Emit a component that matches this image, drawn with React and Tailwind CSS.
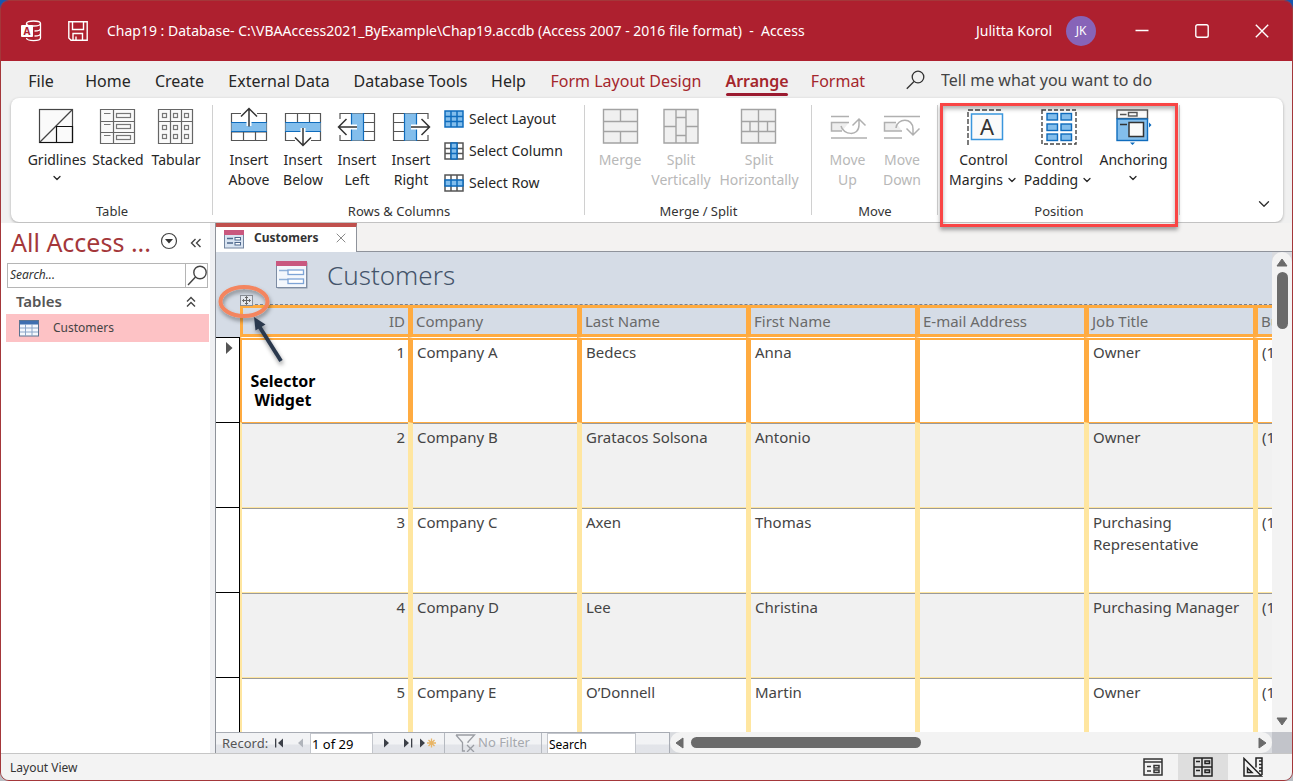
import React from "react";
import { ChevronDown, X } from "lucide-react";

const COLUMNS = ["Company", "Last Name", "First Name", "E-mail Address", "Job Title", "Business Phone"];

const ROWS = [
  ["1", "Company A", "Bedecs", "Anna", "", "Owner", "(123)555-0100"],
  ["2", "Company B", "Gratacos Solsona", "Antonio", "", "Owner", "(123)555-0100"],
  ["3", "Company C", "Axen", "Thomas", "", "Purchasing Representative", "(123)555-0100"],
  ["4", "Company D", "Lee", "Christina", "", "Purchasing Manager", "(123)555-0100"],
  ["5", "Company E", "O’Donnell", "Martin", "", "Owner", "(123)555-0100"],
];

const TABS = [
  { label: "File", width: "w-[26px]" },
  { label: "Home", width: "w-[46px]" },
  { label: "Create", width: "w-[49px]" },
  { label: "External Data", width: "w-[102px]" },
  { label: "Database Tools", width: "w-[113px]" },
  { label: "Help", width: "w-[35px]" },
  { label: "Form Layout Design", width: "w-[152px]", tone: "red" },
  { label: "Arrange", width: "w-[62px]", tone: "active" },
  { label: "Format", width: "w-[52px]", tone: "red" },
];

const BLUE = "#83beec";
const DEEP = "#0f6cbd";
const INK = "#555555";
const MUTED = "#a3a3a3";

function Icon({ children, w = 40, h = 40, className = "" }) {
  return (
    <svg width={w} height={h} viewBox={`0 0 ${w} ${h}`} fill="none" aria-hidden="true" className={`shrink-0 ${className}`}>
      {children}
    </svg>
  );
}

const GridlinesIcon = () => (
  <Icon>
    <rect x="2.5" y="2.5" width="33" height="33" fill="#fafafa" stroke="#444" strokeWidth="1.2" />
    <path d="M2.500 35.500 35.500 2.500" stroke="#444" strokeWidth="1.2" />
    <path d="M19.5 35.500V19.5H35.500V35.500Z" stroke="#111" strokeWidth="1.2" />
    <path d="M2.500 35.500h33" stroke="#111" strokeWidth="1.2" />
  </Icon>
);

const StackedIcon = () => (
  <Icon>
    <rect x="2.5" y="2.5" width="34" height="34" fill="#fafafa" />
    <path d="M2.5 2.5H36.500V36.500H2.5ZM15.5 2.5V36.500M2.5 14.5H36.500M2.5 25.5H36.500" stroke="#666" strokeWidth="1.2" />
    {[7, 18, 29].map((y) => (
      <g key={y} stroke="#777" strokeWidth="1.2">
        <path d={`M6 ${y - 0.5}h6.500`} />
        <rect x="18.5" y={y - 0.5} width="14" height="4" />
      </g>
    ))}
  </Icon>
);

const TabularIcon = () => (
  <Icon>
    <rect x="2.500" y="2.500" width="34" height="34" fill="#fafafa" />
    <path d="M2.500 2.500H36.500V36.500H2.500ZM14.500 2.500V36.500M25.500 2.500V36.500M2.500 14.500H36.500" stroke="#666" strokeWidth="1.200" />
    {[6.5, 18.5, 27.5].map((y) =>
      [6.5, 17.5, 28.5].map((x) => (
        <rect key={`${x}-${y}`} x={x} y={y} width="4" height="4" stroke="#777" strokeWidth="1.200" />
      ))
    )}
  </Icon>
);

const InsertAboveIcon = () => (
  <Icon>
    <path d="M12 6.500H2.500V33.500H37.500V6.500H28M2.500 25H37.500M14.500 25v8.500M26.500 25v8.500" stroke={INK} strokeWidth="1.200" />
    <rect x="2.500" y="15.500" width="35" height="9.500" fill={BLUE} />
    <path d="M2 15.500H38M2 24.500H38" stroke={DEEP} strokeWidth="1.200" />
    <path d="M20 19V5" stroke="#fff" strokeWidth="5" />
    <path d="M20 19.500V1.500M12 9.500l8-8 8 8" stroke="#333" strokeWidth="1.500" />
  </Icon>
);

const InsertBelowIcon = () => (
  <Icon>
    <path d="M12 33.500H2.500V6.500H37.500V33.500H28M14.500 6.500V15.500M26.500 6.500V15.500" stroke={INK} strokeWidth="1.200" />
    <rect x="2.500" y="15.500" width="35" height="9.500" fill={BLUE} />
    <path d="M2 15.500H38M2 24.500H38" stroke={DEEP} strokeWidth="1.200" />
    <path d="M20 21V35" stroke="#fff" strokeWidth="5" />
    <path d="M20 21V38.500M12 30.500l8 8 8-8" stroke="#333" strokeWidth="1.500" />
  </Icon>
);

const SideArrow = () => (
  <>
    <path d="M3 12V6.500H37.500V33.500H3V28M26 15.500h11.500M26 24.500h11.500" stroke={INK} strokeWidth="1.200" />
    <rect x="14.500" y="6.500" width="12" height="27" fill={BLUE} />
    <path d="M14.500 6V34M26.500 6V34" stroke={DEEP} strokeWidth="1.200" />
    <path d="M20 20H5" stroke="#fff" strokeWidth="5" />
    <path d="M20 20H1.500M9.500 12l-8 8 8 8" stroke="#333" strokeWidth="1.500" />
  </>
);
const InsertLeftIcon = () => (
  <Icon>
    <SideArrow />
  </Icon>
);
const InsertRightIcon = () => (
  <Icon>
    <g transform="translate(40 0) scale(-1 1)">
      <SideArrow />
    </g>
  </Icon>
);

function SelectIcon({ kind }) {
  const all = kind === "layout";
  return (
    <Icon w={20} h={18}>
      <rect x="1" y="1" width="18" height="16" fill={all ? BLUE : "#fff"} />
      <path d="M1 1H19V17H1ZM7 1V17M13 1V17M1 6.500H19M1 11.500H19" stroke={all ? DEEP : INK} strokeWidth="1.500" />
      {kind === "column" && (
        <path d="M7 1h6V17H7ZM7 6.500h6M7 11.500h6" fill={BLUE} stroke={DEEP} strokeWidth="1.500" />
      )}
      {kind === "row" && (
        <path d="M1 6H19V12H1ZM7 6v6M13 6v6" fill={BLUE} stroke={DEEP} strokeWidth="1.500" />
      )}
    </Icon>
  );
}

const MergeIcon = () => (
  <Icon>
    <path d="M3.500 2.500H37.500V36H3.500ZM3.500 14.500h34M3.500 24.500h34M20.500 2.500v12M20.500 24.500V36" fill="#f0f0f0" stroke={MUTED} strokeWidth="1.400" />
  </Icon>
);
const SplitVerticalIcon = () => (
  <Icon>
    <path d="M3 2.500H37V36H3ZM15 2.500V36M25 2.500V36M3 19.500H15M25 19.500H37M15 10.500h10M15 28.500h10" fill="#f0f0f0" stroke={MUTED} strokeWidth="1.400" />
  </Icon>
);
const SplitHorizontalIcon = () => (
  <Icon>
    <path d="M2.500 2.500H36.500V36H2.500ZM2.500 14.500h34M2.500 24.500h34M19.500 2.500V36M11 14.500v10M28.500 14.500v10" fill="#f0f0f0" stroke={MUTED} strokeWidth="1.400" />
  </Icon>
);
const MoveUpIcon = () => (
  <Icon>
    <path d="M3 9.500H21M3 31H39" stroke="#b0b0b0" strokeWidth="1.500" />
    <path d="M21 15.500H3.500V24H14" fill="#eee" stroke="#b0b0b0" strokeWidth="1.500" />
    <path d="M13 19c2 9 18 11 18-1V12M24.500 18.500 31 12l6.500 6.500" stroke="#b0b0b0" strokeWidth="1.500" />
  </Icon>
);
const MoveDownIcon = () => (
  <Icon>
    <path d="M2 9.500H38M2 31H20" stroke="#b0b0b0" strokeWidth="1.500" />
    <path d="M14 15.500H2.500V24H20" fill="#eee" stroke="#b0b0b0" strokeWidth="1.500" />
    <path d="M14 21c1-10 17-11 17 1v6M24.500 21.500 31 28l6.500-6.500" stroke="#b0b0b0" strokeWidth="1.500" />
  </Icon>
);
const MarginsIcon = () => (
  <Icon>
    <path d="M4 38V3H39" stroke="#444" strokeWidth="1.400" strokeDasharray="5 2" />
    <rect x="7.500" y="7" width="31" height="25.500" fill="#fafafa" stroke="#3a96dd" strokeWidth="1.500" />
    <text x="23" y="28" textAnchor="middle" fontSize="22" fill="#333" fontFamily="Noto Sans, sans-serif">A</text>
  </Icon>
);
const PaddingIcon = () => (
  <Icon>
    <rect x="3" y="3" width="34" height="34" stroke="#444" strokeWidth="1.400" strokeDasharray="4 2" />
    {[6.5, 17, 27].map((y) =>
      [8, 22].map((x) => (
        <rect key={`${x}-${y}`} x={x} y={y} width="10.500" height="6.500" fill={BLUE} stroke={DEEP} strokeWidth="1.400" />
      ))
    )}
  </Icon>
);
const AnchoringIcon = () => (
  <Icon>
    <rect x="3" y="3" width="30.500" height="8.500" fill="#fafafa" stroke="#555" strokeWidth="1.400" />
    <path d="M6 7.500h6.500" stroke="#555" strokeWidth="1.400" />
    <rect x="14.500" y="5.500" width="8.500" height="3.500" stroke="#555" strokeWidth="1.400" />
    <rect x="3" y="12" width="30.500" height="21.500" fill={BLUE} stroke={DEEP} strokeWidth="1.400" />
    <path d="M6 17.500h7" stroke="#333" strokeWidth="1.400" />
    <rect x="15" y="15.500" width="14.500" height="14" fill="#fafafa" stroke="#333" strokeWidth="1.500" />
    <path d="M35 15.500l2.500 2.500-2.500 2.500ZM16 35.500h5l-2.500 2.500Z" fill={DEEP} />
  </Icon>
);

function BigButton({ icon, lines, width, arrow, disabled }) {
  return (
    <button type="button" disabled={disabled} className={`flex shrink-0 flex-col items-center ${width} ${disabled ? "text-[#b8b8b8]" : "text-[#262626]"}`}>
      {icon}
      <span className="mt-[3px] flex flex-col items-center text-sm leading-5 whitespace-nowrap">
        {lines.map((line, i) => (
          <span key={line} className="flex items-center gap-[3px]">
            {line}
            {arrow && i === 1 && <ChevronDown size={12} strokeWidth={2.5} />}
          </span>
        ))}
        {arrow && lines.length === 1 && (
          <span className="flex h-4 items-center">
            <ChevronDown size={12} strokeWidth={2.5} />
          </span>
        )}
      </span>
    </button>
  );
}

function Group({ label, width, children }) {
  return (
    <section aria-label={label} className={`relative flex shrink-0 flex-col ${width}`}>
      <div className="flex h-[103px] pt-[9px]">{children}</div>
      <div className="text-center text-[13px] leading-5 text-[#333]">{label}</div>
      <span className="absolute top-[7px] right-0 h-[110px] w-px bg-[#d0d0d0]" />
    </section>
  );
}

function TitleBar() {
  return (
    <header className="flex h-[60px] shrink-0 items-center bg-[#ae202f] text-sm text-white">
      <svg width="22" height="22" viewBox="0 0 22 22" className="ml-[19px] shrink-0" aria-hidden="true">
        <g fill="none" stroke="#fff" strokeWidth="1.300">
          <ellipse cx="13.500" cy="3.500" rx="7" ry="2.500" />
          <path d="M20.500 3.500v14.500c0 3.500-14 3.500-14 0M20.500 8.500c0 2-4 2.500-6 2.500M20.500 13.500c0 2-4 2.500-6 2.500M6.500 3.500V6" />
        </g>
        <rect x="1" y="5" width="12" height="12" rx="1" fill="#fff" />
        <text x="7" y="14.500" textAnchor="middle" fontSize="10" fontWeight="700" fill="#ae202f" fontFamily="Noto Sans, sans-serif">A</text>
      </svg>
      <button type="button" aria-label="Save" className="ml-[26px] shrink-0">
        <svg width="20" height="20" viewBox="0 0 20 20" fill="none" stroke="#fff" strokeWidth="1.400" aria-hidden="true">
          <path d="M.8.8H19.200V19.200H3L.8 17ZM4.500.8V8.500H15.500V.8M5 19V12.500H14.500V19M8 19v-3.500" />
        </svg>
      </button>
      <h1 className="ml-[19px] grow whitespace-pre">
        Chap19 : Database- C:\VBAAccess2021_ByExample\Chap19.accdb (Access 2007 - 2016 file format){"  "}-{"  "}Access
      </h1>
      <span>Julitta Korol</span>
      <span className="ml-[14px] flex size-[30px] items-center justify-center rounded-full bg-[#8764b8] text-xs">JK</span>
      <button type="button" aria-label="Minimize" className="ml-4 flex w-[60px] justify-center">
        <svg width="14" height="14" viewBox="0 0 14 14" stroke="#fff" strokeWidth="1.300" aria-hidden="true">
          <path d="M.5 6.500h13" />
        </svg>
      </button>
      <button type="button" aria-label="Maximize" className="flex w-[60px] justify-center">
        <svg width="14" height="14" viewBox="0 0 14 14" fill="none" stroke="#fff" strokeWidth="1.400" aria-hidden="true">
          <rect x=".8" y=".8" width="12.400" height="12.400" rx="1.800" />
        </svg>
      </button>
      <button type="button" aria-label="Close" className="flex w-[60px] justify-center">
        <svg width="14" height="14" viewBox="0 0 14 14" stroke="#fff" strokeWidth="1.400" aria-hidden="true">
          <path d="M.8.8 13.200 13.200M13.200.8.8 13.200" />
        </svg>
      </button>
    </header>
  );
}

function Ribbon() {
  return (
    <div className="shrink-0 bg-[#f0f0f0] pb-px">
      <nav aria-label="Ribbon tabs" className="flex h-[37px] items-center gap-x-6 pl-[27px] text-base text-[#262626]">
        {TABS.map(({ label, width, tone }) => (
          <button
            key={label}
            type="button"
            className={`relative flex h-full shrink-0 items-center justify-center whitespace-nowrap pt-[2px] ${width} ${label === "File" ? "mr-[7px]" : ""} ${
              tone ? "text-[#a4262c]" : ""
            } ${tone === "active" ? "font-semibold" : ""}`}
          >
            {label}
            {tone === "active" && <span className="absolute inset-x-0 bottom-[2px] h-[3px] rounded-sm bg-[#9b1b30]" />}
          </button>
        ))}
        <div className="ml-[18px] flex grow items-center gap-4">
          <svg width="19" height="20" viewBox="0 0 19 20" fill="none" stroke="#333" strokeWidth="1.300" className="shrink-0" aria-hidden="true">
            <circle cx="12" cy="7" r="5.800" />
            <path d="M8 11.500.8 18.800" />
          </svg>
          <input
            type="text"
            aria-label="Tell me what you want to do"
            placeholder="Tell me what you want to do"
            className="w-full min-w-0 bg-transparent text-base text-[#333] outline-none placeholder:text-[#444]"
          />
        </div>
      </nav>

      <div className="mr-[9px] ml-[10px] flex h-[124px] rounded-lg bg-white shadow-[0_1px_3px_rgba(0,0,0,0.3)]">
        <Group label="Table" width="w-[202px]">
          <div className="flex pl-[15px]">
            <BigButton width="w-[62px]" icon={<GridlinesIcon />} lines={["Gridlines"]} arrow />
            <BigButton width="w-[60px]" icon={<StackedIcon />} lines={["Stacked"]} />
            <BigButton width="w-[56px]" icon={<TabularIcon />} lines={["Tabular"]} />
          </div>
        </Group>
        <Group label="Rows & Columns" width="w-[372px]">
          <div className="flex pl-[9px]">
            <BigButton width="w-[54px]" icon={<InsertAboveIcon />} lines={["Insert", "Above"]} />
            <BigButton width="w-[54px]" icon={<InsertBelowIcon />} lines={["Insert", "Below"]} />
            <BigButton width="w-[54px]" icon={<InsertLeftIcon />} lines={["Insert", "Left"]} />
            <BigButton width="w-[54px]" icon={<InsertRightIcon />} lines={["Insert", "Right"]} />
            <div className="ml-[6px] flex flex-col items-start gap-2 text-sm text-[#262626]">
              <button type="button" className="flex h-6 items-center gap-[5px]">
                <SelectIcon kind="layout" /> Select Layout
              </button>
              <button type="button" className="flex h-6 items-center gap-[5px]">
                <SelectIcon kind="column" /> Select Column
              </button>
              <button type="button" className="flex h-6 items-center gap-[5px]">
                <SelectIcon kind="row" /> Select Row
              </button>
            </div>
          </div>
        </Group>
        <Group label="Merge / Split" width="w-[227px]">
          <div className="flex pl-[7px]">
            <BigButton width="w-[56px]" icon={<MergeIcon />} lines={["Merge"]} disabled />
            <BigButton width="w-[66px]" icon={<SplitVerticalIcon />} lines={["Split", "Vertically"]} disabled />
            <BigButton width="w-[90px]" icon={<SplitHorizontalIcon />} lines={["Split", "Horizontally"]} disabled />
          </div>
        </Group>
        <Group label="Move" width="w-[126px]">
          <div className="flex pl-2">
            <BigButton width="w-[55px]" icon={<MoveUpIcon />} lines={["Move", "Up"]} disabled />
            <BigButton width="w-[54px]" icon={<MoveDownIcon />} lines={["Move", "Down"]} disabled />
          </div>
        </Group>
        <Group label="Position" width="w-[242px]">
          <div className="flex pl-2">
            <BigButton width="w-[75px]" icon={<MarginsIcon />} lines={["Control", "Margins"]} arrow />
            <BigButton width="w-[75px]" icon={<PaddingIcon />} lines={["Control", "Padding"]} arrow />
            <BigButton width="w-[75px]" icon={<AnchoringIcon />} lines={["Anchoring"]} arrow />
          </div>
          <span className="pointer-events-none absolute top-[5px] right-[2px] -bottom-[5px] left-[2px] z-10 border-[3px] border-[#f94545] shadow-[0_3px_4px_rgba(0,0,0,0.35),inset_0_3px_4px_rgba(0,0,0,0.3)]" />
        </Group>
        <div className="flex grow items-end justify-end pr-[10px] pb-[9px]">
          <button type="button" aria-label="Collapse ribbon">
            <ChevronDown size={18} strokeWidth={1.8} color="#333" />
          </button>
        </div>
      </div>
    </div>
  );
}

function NavigationPane() {
  return (
    <aside className="flex w-[209px] shrink-0 flex-col bg-white">
      <div className="flex h-10 items-center pr-2 pl-[10px]">
        <h2 className="grow text-[25px] whitespace-nowrap text-[#a4373a]">All Access ...</h2>
        <button type="button" aria-label="Pane options" className="-mt-1 mr-3">
          <svg width="18" height="18" viewBox="0 0 18 18" fill="none" aria-hidden="true">
            <circle cx="9" cy="9" r="7.500" stroke="#444" strokeWidth="1.200" />
            <path d="M5 7h8L9 11.500Z" fill="#333" />
          </svg>
        </button>
        <button type="button" aria-label="Close pane">
          <svg width="12" height="12" viewBox="0 0 12 12" fill="none" stroke="#444" strokeWidth="1.400" aria-hidden="true">
            <path d="M5.500 2 1.500 6l4 4M10.500 2 6.500 6l4 4" />
          </svg>
        </button>
      </div>
      <div className="mr-[2px] ml-[6px] flex h-[25px] border border-[#b5b5b5]">
        <input type="text" aria-label="Search objects" placeholder="Search..." className="w-full min-w-0 pb-px pl-[2px] text-xs italic outline-none placeholder:text-[#333]" />
        <button type="button" aria-label="Search" className="flex w-[22px] shrink-0 items-center justify-center border-l border-[#b5b5b5]">
          <svg width="20" height="21" viewBox="0 0 20 21" fill="none" stroke="#444" strokeWidth="1.400" aria-hidden="true">
            <circle cx="13" cy="7.500" r="6.200" />
            <path d="M8.500 12 1 20" />
          </svg>
        </button>
      </div>
      <div className="flex h-[26px] items-center justify-between pt-px pr-[13px] pl-[15px]">
        <h3 className="text-[15px] font-semibold text-[#555]">Tables</h3>
        <button type="button" aria-label="Collapse tables">
          <svg width="12" height="12" viewBox="0 0 12 12" fill="none" stroke="#444" strokeWidth="1.400" aria-hidden="true">
            <path d="M2 5.500 6 1.500l4 4M2 10.500 6 6.500l4 4" />
          </svg>
        </button>
      </div>
      <button type="button" className="mr-px ml-[5px] flex h-7 items-center gap-[14px] bg-[#fdc2c5] pl-[13px] text-xs text-[#444]">
        <svg width="20" height="17" viewBox="0 0 20 17" fill="none" aria-hidden="true">
          <rect x=".5" y=".5" width="19" height="15.500" fill="#f4f8fd" stroke="#5b7390" />
          <rect x="1" y="1" width="18" height="3.500" fill="#3f6fb0" />
          <path d="M6.500 4v12M13 4v12M1 8h18M1 12h18" stroke="#8aa5c8" />
        </svg>
        Customers
      </button>
    </aside>
  );
}

function FormIcon({ big }) {
  return big ? (
    <svg width="32" height="28" viewBox="0 0 32 28" fill="none" className="shrink-0" aria-hidden="true">
      <rect x="1.500" y="1.500" width="30" height="26" fill="#8e99a8" />
      <rect x=".5" y=".5" width="30" height="26" fill="#f3f7fc" stroke="#7d8ca3" />
      <rect x="0" y="0" width="31" height="5" fill="#c9587f" />
      <path d="M3 9.500h9M3 18.500h9" stroke="#8fb0d8" strokeWidth="1.300" />
      <rect x="12" y="9" width="15.500" height="4.500" fill="#fff" stroke="#7da4d6" strokeWidth="1.300" />
      <rect x="12" y="18" width="15.500" height="4.500" fill="#fff" stroke="#7da4d6" strokeWidth="1.300" />
    </svg>
  ) : (
    <svg width="20" height="19" viewBox="0 0 20 19" fill="none" className="shrink-0" aria-hidden="true">
      <rect x=".5" y="1" width="19" height="17" fill="#d9e4f2" stroke="#7486a0" />
      <rect x="0" y="0" width="20" height="5" fill="#c9587f" />
      <path d="M3 8.500h6M3 13h6" stroke="#4d678c" strokeWidth="1.500" />
      <rect x="11" y="7.500" width="5.500" height="2.500" fill="#fff" stroke="#4d678c" />
      <rect x="11" y="12.500" width="5.500" height="2.500" fill="#fff" stroke="#4d678c" />
    </svg>
  );
}

function RecordTable() {
  return (
    <table className="w-full min-w-[1206px] table-fixed border-separate border-spacing-0 text-left text-[15px] leading-[22px] text-[#444]">
      <colgroup>
        <col className="w-6" />
        <col className="w-[168px]" />
        {COLUMNS.map((name) => (
          <col key={name} className="w-[169px]" />
        ))}
      </colgroup>
      <thead>
        <tr className="h-8 text-[#6a6a6a]">
          <td className="bg-[#d5dce6]" />
          <th scope="col" className="border-y-[3px] border-l-[3px] border-[#ffab40] bg-[#d5dce6] pr-[3px] text-right font-normal">ID</th>
          {COLUMNS.map((name) => (
            <th key={name} scope="col" className="border-y-[3px] border-l-[5px] border-[#ffab40] bg-[#d5dce6] pl-[3px] font-normal whitespace-nowrap">
              {name}
            </th>
          ))}
        </tr>
      </thead>
      <tbody>
        {ROWS.map((row, r) => {
          const first = r === 0;
          const tint = r % 2 ? "bg-[#f1f1f1]" : "bg-white";
          const side = first ? "border-l-[#ffab40]" : "border-l-[#ffe6a0]";
          const top = first
            ? "border-t-white shadow-[inset_0_2px_0_#ffab40]"
            : r === 1
              ? "border-t-[#ffab40] shadow-[inset_0_1px_0_#9a9a9a]"
              : "border-t-[#ffe6a0] shadow-[inset_0_1px_0_#9a9a9a]";
          return (
            <tr key={row[0]} className="h-[85px] align-top">
              <td className="border-t border-r border-black bg-white p-0">
                {first && (
                  <svg width="8" height="12" viewBox="0 0 8 12" className="mt-1 ml-[10px]" aria-hidden="true">
                    <path d="M0 0l6.500 6L0 12Z" fill="#555" />
                  </svg>
                )}
              </td>
              {row.map((value, c) => (
                <td
                  key={c}
                  className={`border-t pt-[3px] pb-0 ${side} ${top} ${tint} ${c === 0 ? "border-l-2 pr-[3px] text-right" : "border-l-[5px] pr-0 pl-1"}`}
                >
                  {value}
                </td>
              ))}
            </tr>
          );
        })}
      </tbody>
    </table>
  );
}

function Annotation() {
  return (
    <>
      <svg width="110" height="100" viewBox="0 0 110 100" fill="none" className="pointer-events-none absolute top-[22px] left-0 z-10" aria-hidden="true">
        <defs>
          <filter id="soft" x="-20%" y="-20%" width="150%" height="150%">
            <feDropShadow dx="1" dy="3" stdDeviation="2" floodOpacity="0.4" />
          </filter>
        </defs>
        <rect x="24.500" y="21.500" width="12" height="10" fill="#e3e7ee" stroke="#8a8f98" />
        <path d="M30.500 22.500v8M26.500 26.500h8M29 24l1.500-1.500 1.500 1.500M29 29l1.500 1.500 1.500-1.500M28 25 26.500 26.500l1.500 1.500M33 25l1.500 1.500-1.500 1.500" stroke="#666" />
        <ellipse cx="28" cy="27.500" rx="23.500" ry="14.500" stroke="#f4855f" strokeWidth="4" filter="url(#soft)" />
        <g filter="url(#soft)">
          <path d="M65 87 43 52" stroke="#2a394d" strokeWidth="4" />
          <path d="M38 43l11.500 7.500-10 6Z" fill="#2a394d" />
        </g>
      </svg>
      <p className="absolute top-[120px] left-[27px] z-10 w-20 text-center text-base leading-[19px] font-bold text-black">Selector Widget</p>
    </>
  );
}

function ScrollArrow({ dir, label }) {
  const paths = { up: "M1 9 6 2l5 7Z", down: "M1 3l5 7 5-7Z", left: "M9 1 2 6l7 5Z", right: "M3 1l7 5-7 5Z" };
  return (
    <button type="button" aria-label={label} className="flex size-[18px] shrink-0 items-center justify-center">
      <svg width="12" height="12" viewBox="0 0 12 12" aria-hidden="true">
        <path d={paths[dir]} fill="#6b6b6b" stroke="#6b6b6b" strokeWidth="1" strokeLinejoin="round" />
      </svg>
    </button>
  );
}

function NavArrow({ label, dir, bar, disabled, star }) {
  const left = dir === "left";
  return (
    <button type="button" aria-label={label} disabled={disabled} className="flex h-full w-5 shrink-0 items-center justify-center">
      <svg width="20" height="12" viewBox="0 0 20 12" fill={disabled ? "#b0b4bb" : "#3c4048"} aria-hidden="true">
        {left ? <path d="M13 1.500v9L8 6Z" /> : <path d={star ? "M2 1.500v9L7 6Z" : "M6 1.500v9L11 6Z"} />}
        {bar && <rect x={left ? 5 : 13} y="1.500" width="1.300" height="9" />}
        {star && <path d="M13.500 1.500v9M9 6h9M10.500 3l6 6M16.500 3l-6 6" stroke="#e8b566" strokeWidth="1.300" />}
      </svg>
    </button>
  );
}

function RecordBar() {
  return (
    <div className="flex h-[21px] shrink-0">
      <div className="flex w-[454px] shrink-0 items-center border-t border-r border-[#a8acb4] bg-linear-to-b from-[#f2f3f5] from-55% to-[#e2e4e9] to-60% pl-[6px] text-[13px] text-[#555]">
        <span className="w-[48px] pt-[2px]">Record:</span>
        <NavArrow label="First record" dir="left" bar />
        <NavArrow label="Previous record" dir="left" disabled />
        <input aria-label="Current record" defaultValue="1 of 29" className="h-full w-[63px] border border-b-0 border-[#c3c6cc] bg-white pt-px pl-px text-black outline-none" />
        <span className="ml-[5px] flex h-full items-center">
          <NavArrow label="Next record" dir="right" />
          <NavArrow label="Last record" dir="right" bar />
          <NavArrow label="New record" dir="right" star />
        </span>
        <button type="button" disabled className="ml-[6px] flex h-full w-[98px] items-center gap-[2px] border-x border-[#b5b9c0] pl-[10px] whitespace-nowrap text-[#a6a9ae]">
          <svg width="21" height="18" viewBox="0 0 21 18" fill="none" stroke="#9a9da3" strokeWidth="1.300" className="shrink-0" aria-hidden="true">
            <path d="M1 1H19.500L13 8v1M1 1 7.500 8.500V17h2.500M12 11l7 7M19 11l-7 7" />
          </svg>
          No Filter
        </button>
        <input aria-label="Search records" defaultValue="Search" className="ml-[5px] h-full w-[89px] border border-b-0 border-[#c3c6cc] bg-white pt-px pl-px text-xs text-black outline-none" />
      </div>
      <div className="flex min-w-0 grow items-center rounded-full bg-[#f3f3f3] px-px">
        <ScrollArrow dir="left" label="Scroll left" />
        <div className="flex grow items-center pl-[2px]">
          <span className="h-[11px] w-[41%] rounded-full bg-[#6b6b6b]" />
        </div>
        <ScrollArrow dir="right" label="Scroll right" />
      </div>
      <div className="w-5 shrink-0 bg-[#c2c4ca]" />
    </div>
  );
}

function DocumentArea() {
  return (
    <main className="flex min-w-0 grow flex-col border-l border-[#8f939b] bg-[#d9dbdf]">
      <div className="flex h-[29px] shrink-0 bg-[#f3f2f1]">
        <div className="flex w-[141px] shrink-0 items-center gap-[10px] border-t-4 border-r border-t-[#c0504d] border-r-[#8f939b] bg-white pl-[8px]">
          <FormIcon />
          <span className="w-[69px] pb-[3px] text-xs font-bold text-[#333]">Customers</span>
          <button type="button" aria-label="Close tab" className="pb-[3px]">
            <X size={16} strokeWidth={1.3} color="#777" />
          </button>
        </div>
        <div className="grow border-b border-[#8f939b]" />
      </div>
      <div className="flex min-h-0 grow">
        <div className="relative min-w-0 grow overflow-hidden bg-white">
          <div className="flex h-[53px] items-center bg-[#d5dce6] pb-[7px] pl-[60px]">
            <FormIcon big />
            <h2 className="ml-[19px] text-[26px] leading-8 font-light text-[#44546a]">Customers</h2>
          </div>
          <div className="-mt-px flex bg-[#d5dce6] pl-6">
            <span className="grow border-t border-dashed border-[#7c828c]" />
          </div>
          <RecordTable />
          <Annotation />
        </div>
        <div className="flex w-5 shrink-0 flex-col items-center rounded-t-full bg-[#f3f3f3] py-[2px]">
          <ScrollArrow dir="up" label="Scroll up" />
          <div className="flex grow flex-col">
            <span className="h-[13%] w-[11px] rounded-full bg-[#6b6b6b]" />
          </div>
          <ScrollArrow dir="down" label="Scroll down" />
        </div>
      </div>
      <RecordBar />
    </main>
  );
}

function StatusBar() {
  return (
    <footer className="flex h-[27px] shrink-0 items-center border-t border-[#c6c6c6] bg-[#f3f3f3] pl-[9px] text-xs text-[#333]">
      <span className="grow pt-px">Layout View</span>
      <button type="button" aria-label="Form View" className="flex h-full w-[50px] items-center justify-center">
        <svg width="20" height="18" viewBox="0 0 20 18" fill="none" stroke="#333" strokeWidth="1.500" aria-hidden="true">
          <path d="M1 1H19V17H1ZM1 4H19M4 8.500h4M4 13h4M11 7.500h5v2.500h-5ZM11 12h5v2.500h-5Z" />
        </svg>
      </button>
      <button type="button" aria-label="Layout View" className="flex h-full w-[50px] items-center justify-center bg-[#dedede]">
        <svg width="20" height="20" viewBox="0 0 20 20" fill="none" stroke="#222" strokeWidth="1.500" aria-hidden="true">
          <path d="M1 1H19V19H1ZM9 1V19M1 10H19M3 4.500h4M3 13.500h4M12 4h4.500v2.500H12ZM12 13h4.500v2.500H12Z" />
        </svg>
      </button>
      <button type="button" aria-label="Design View" className="mr-[14px] flex h-full w-[50px] items-center justify-center">
        <svg width="20" height="20" viewBox="0 0 20 20" fill="none" stroke="#222" strokeWidth="1.500" aria-hidden="true">
          <path d="M1 1.500V19H18.500ZM4.500 11v4.500H9ZM13 10.500V1h6V18M16 4h3M16 7.500h3M16 11h3M16 14h3" />
        </svg>
      </button>
    </footer>
  );
}

export default function App() {
  return (
    <div className="h-screen overflow-hidden bg-linear-to-b from-[#1657b0] from-50% to-[#b9bcc2] to-50% font-['Noto_Sans',sans-serif]">
      <div className="flex h-full flex-col overflow-hidden rounded-[9px] border border-[#a4373a]">
        <TitleBar />
        <Ribbon />
        <div className="flex min-h-0 grow">
          <NavigationPane />
          <div className="w-[5px] shrink-0 bg-[#eff0f3]" />
          <DocumentArea />
        </div>
        <StatusBar />
      </div>
    </div>
  );
}
